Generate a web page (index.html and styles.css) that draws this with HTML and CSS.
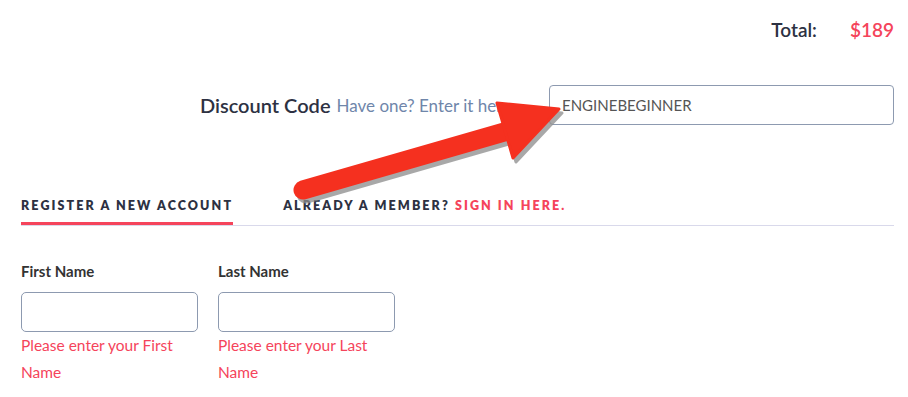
FILE: index.html
```html
<!DOCTYPE html>
<html lang="en">
<head>
    <meta charset="UTF-8">
    <meta name="viewport" content="width=device-width, initial-scale=1.0">
    <title>Checkout</title>
    <link rel="stylesheet" href="styles.css">
</head>
<body>
    <div class="page">
        <!-- Order total -->
        <div class="summary">
            <span class="summary-label">Total:</span>
            <span class="summary-price">$189</span>
        </div>

        <!-- Discount code -->
        <div class="discount">
            <label class="discount-label" for="discount">Discount Code</label>
            <span class="discount-hint">Have one? Enter it here</span>
            <input type="text" id="discount" class="discount-input" value="ENGINEBEGINNER">
        </div>

        <!-- Account tabs -->
        <div class="tabs">
            <a href="#" class="tab active">Register a new account</a>
            <a href="#" class="tab">Already a member? <span class="tab-link">Sign in here.</span></a>
        </div>

        <form class="fields">
            <div class="field">
                <label for="first-name">First Name</label>
                <input type="text" id="first-name">
                <p class="error">Please enter your First Name</p>
            </div>
            <div class="field">
                <label for="last-name">Last Name</label>
                <input type="text" id="last-name">
                <p class="error">Please enter your Last Name</p>
            </div>
        </form>

        <!-- Annotation arrow -->
        <svg class="arrow" width="908" height="397" viewBox="0 0 908 397">
            <g transform="translate(3,4)" fill="#8c8c8c" stroke="#8c8c8c" opacity="0.75">
                <line x1="303" y1="190" x2="508" y2="131" stroke-width="19" stroke-linecap="round"/>
                <polygon points="497,103 559,109 513,158" stroke-width="3" stroke-linejoin="round"/>
            </g>
            <g fill="#f5301f" stroke="#f5301f">
                <line x1="303" y1="190" x2="508" y2="131" stroke-width="19" stroke-linecap="round"/>
                <polygon points="497,103 559,109 513,158" stroke-width="3" stroke-linejoin="round"/>
            </g>
        </svg>
    </div>
</body>
</html>
```

FILE: styles.css
```css
/* Basic styling */
body {
    font-family: Lato, "Open Sans", Arial, sans-serif;
    margin: 0;
    padding: 0;
    background-color: #fff;
    color: #2d3142;
}
.page {
    position: relative;
    padding: 0 14px 0 21px;
    height: 397px;
    overflow: hidden;
}
.summary {
    display: flex;
    justify-content: flex-end;
    align-items: baseline;
    padding-top: 18px;
    height: 30px;
}
.summary-label {
    font-size: 19px;
    font-weight: 600;
    color: #2d3142;
}
.summary-price {
    font-size: 19px;
    font-weight: 600;
    color: #f5445b;
    margin-left: 33px;
}
.discount {
    display: flex;
    justify-content: flex-end;
    align-items: center;
    margin-top: 37px;
}
.discount-label {
    font-size: 20px;
    font-weight: 600;
    color: #2d3142;
}
.discount-hint {
    font-size: 17px;
    color: #6f86aa;
    margin-left: 6px;
    margin-right: 38px;
}
.discount-input {
    width: 345px;
    height: 40px;
    box-sizing: border-box;
    padding: 0 12px;
    border: 1px solid #8d9ab0;
    border-radius: 4px;
    font-family: Lato, "Open Sans", Arial, sans-serif;
    font-size: 15px;
    color: #555;
    outline: none;
}
.tabs {
    display: flex;
    margin-top: 73px;
    border-bottom: 1px solid #d9d9eb;
}
.tab {
    display: block;
    font-size: 12.5px;
    font-weight: 800;
    text-transform: uppercase;
    letter-spacing: 2.1px;
    color: #2d3142;
    text-decoration: none;
    padding-bottom: 9px;
    border-bottom: 3px solid transparent;
    margin-right: 50px;
}
.tab.active {
    border-bottom-color: #f5445b;
}
.tab-link {
    color: #f5445b;
}
.fields {
    display: grid;
    grid-template-columns: 177px 177px;
    column-gap: 20px;
    margin-top: 36px;
}
.field label {
    display: block;
    font-size: 15px;
    font-weight: 700;
    color: #333;
    margin-bottom: 12px;
}
.field input {
    display: block;
    width: 100%;
    height: 40px;
    box-sizing: border-box;
    border: 1px solid #8d9ab0;
    border-radius: 5px;
    outline: none;
}
.error {
    margin: 0;
    font-size: 15.5px;
    line-height: 27px;
    color: #f5445b;
}
.arrow {
    position: absolute;
    top: 0;
    left: 0;
    pointer-events: none;
}
```
